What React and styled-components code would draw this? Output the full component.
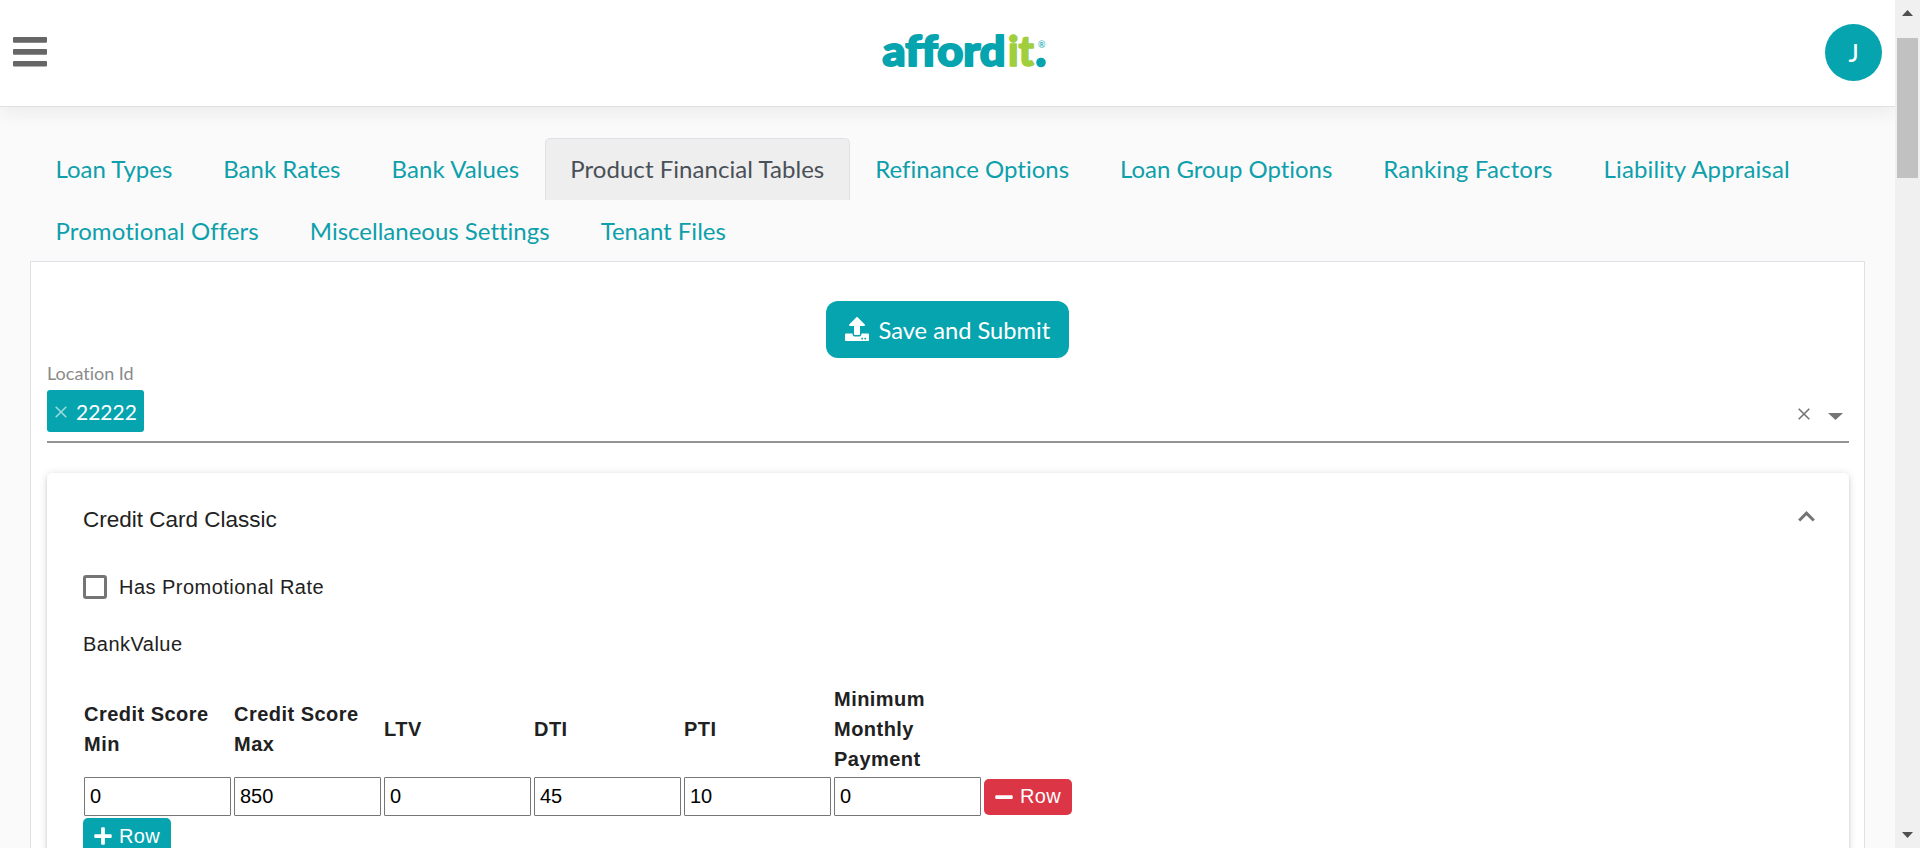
import React from "react";
import styled, { createGlobalStyle } from "styled-components";
import { FaUpload, FaPlus, FaMinus } from "react-icons/fa";

const teal = "#05a4af";

const GlobalStyle = createGlobalStyle`
  *, *::before, *::after { box-sizing: border-box; }
  body { margin: 0; background: #fafafa; font-family: Lato, sans-serif; font-variant-ligatures: none; overflow: hidden; }
`;

const Window = styled.div`
  display: grid;
  grid-template-columns: minmax(0, 1fr) 25px;
  height: 848px;
  overflow: hidden;
`;

const Page = styled.div`
  display: flex;
  flex-direction: column;
  overflow: hidden;
  height: 848px;
`;

const Header = styled.header`
  flex: none;
  display: grid;
  grid-template-columns: 1fr auto 1fr;
  align-items: center;
  height: 107px;
  padding: 0 13px;
  background: #fff;
  border-bottom: 1px solid #dee0e2;
  box-shadow: 0 8px 16px rgba(0, 0, 0, 0.05);
`;

const MenuIcon = styled.svg`
  display: block;
  width: 34px;
  height: 30px;
  margin-top: -3px;
  fill: #666;
`;

const Logo = styled.svg`
  display: block;
  width: 168px;
  height: 64px;
  margin-left: 33px;
  font-family: Lato, sans-serif;
  font-weight: 900;
`;

const Avatar = styled.div`
  justify-self: end;
  width: 57px;
  height: 57px;
  margin-top: -1px;
  border-radius: 50%;
  background: ${teal};
  color: #fff;
  font-size: 24px;
  font-weight: 500;
  line-height: 58px;
  text-align: center;
`;

const Tabs = styled.nav`
  flex: none;
  display: flex;
  flex-wrap: wrap;
  padding: 31px 30px 0;
`;

const Tab = styled.a`
  height: 62px;
  padding: 0 24.5px;
  border: 1px solid ${(p) => (p.$active ? "#dee2e6" : "transparent")};
  border-bottom: 0;
  border-radius: 5px 5px 0 0;
  background: ${(p) => (p.$active ? "#eeeeee" : "transparent")};
  color: ${(p) => (p.$active ? "#495057" : "#0d9fab")};
  font-size: 24px;
  letter-spacing: ${(p) => p.$tracking}px;
  line-height: 60px;
  white-space: nowrap;
`;

const Panel = styled.main`
  flex: 1;
  display: flex;
  flex-direction: column;
  margin: -1px 30px 0;
  padding: 39px 15px 0 16px;
  background: #fff;
  border: 1px solid #dee2e6;
  border-bottom: 0;
`;

const SubmitButton = styled.button`
  flex: none;
  align-self: center;
  display: flex;
  align-items: center;
  gap: 10px;
  width: 243px;
  height: 57px;
  margin-right: 2px;
  padding: 0 19px;
  border: 0;
  border-radius: 12px;
  background: ${teal};
  color: #fff;
  font: 23.7px Lato, sans-serif;
  white-space: nowrap;
  svg { flex: none; width: 24px; height: 24px; margin-top: -1px; }
`;

const SelectLabel = styled.label`
  margin-top: 4px;
  margin-bottom: 1px;
  color: #8a8a8a;
  font-size: 18px;
  line-height: 22px;
`;

const Select = styled.div`
  flex: none;
  display: flex;
  align-items: center;
  height: 58px;
  padding: 0 6px 4px 0;
  border-bottom: 2px solid #949494;
`;

const Chip = styled.span`
  display: flex;
  align-items: center;
  gap: 9px;
  width: 97px;
  height: 42px;
  padding: 1px 8px 0;
  border-radius: 3px;
  background: ${teal};
  color: #fff;
  font-size: 21px;
  svg { flex: none; width: 12px; height: 12px; opacity: 0.6; }
`;

const SelectIcons = styled.span`
  display: flex;
  align-items: center;
  gap: 18px;
  margin-left: auto;
  padding-top: 6px;
  color: #757575;
  svg { display: block; }
`;

const DropArrow = styled.svg`
  width: 15px;
  height: 7px;
  margin-top: 4px;
  fill: currentColor;
`;

const Card = styled.section`
  flex: 1;
  margin-top: 30px;
  padding: 32px 36px 0;
  background: #fff;
  border-radius: 5px;
  box-shadow: 0 4px 1px -3px rgba(0, 0, 0, 0.18), 0 2px 3px rgba(0, 0, 0, 0.12), 0 1px 8px rgba(0, 0, 0, 0.14);
  color: #212121;
  font-family: "Liberation Sans", Arial, sans-serif;
  font-size: 20px;
  letter-spacing: 0.47px;
`;

const CardHeader = styled.div`
  display: flex;
  align-items: center;
  justify-content: space-between;
  height: 30px;
  font-size: 22.5px;
  letter-spacing: 0;
  svg { margin: -8px -2px 0 0; }
`;

const CheckRow = styled.label`
  display: flex;
  align-items: center;
  gap: 12px;
  height: 30px;
  margin-top: 37px;
`;

const CheckBox = styled.span`
  width: 24px;
  height: 24px;
  margin-top: -1px;
  border: 3px solid #757575;
  border-radius: 3px;
`;

const SectionName = styled.p`
  margin: 27px 0 25px;
  line-height: 30px;
`;

const RateTable = styled.div`
  display: grid;
  grid-template-columns: repeat(6, 147px) auto;
  justify-content: start;
  align-items: center;
  column-gap: 3px;
  row-gap: 3px;
  padding-left: 1px;
`;

const HeadCell = styled.div`
  font-weight: 700;
  line-height: 30px;
`;

const Field = styled.input`
  width: 147px;
  height: 39px;
  padding: 0 5px;
  border: 1px solid #767676;
  border-radius: 1px;
  background: #fff;
  color: #000;
  font: 20px "Liberation Sans", Arial, sans-serif;
`;

const RowButton = styled.button`
  display: flex;
  align-items: center;
  gap: 6px;
  width: 88px;
  height: 36px;
  margin-top: ${(p) => (p.$tone === "add" ? "2px" : "0")};
  padding: 0 10px;
  border: 0;
  border-radius: 5px;
  background: ${(p) => (p.$tone === "add" ? teal : "#dc3545")};
  color: #fff;
  font: 20px "Liberation Sans", Arial, sans-serif;
  letter-spacing: 0.3px;
  svg { flex: none; width: 20px; height: 20px; }
`;

const Scrollbar = styled.aside`
  display: flex;
  flex-direction: column;
  align-items: center;
  height: 848px;
  padding: 10px 0;
  background: #f0f0f0;
  svg { display: block; fill: #505050; }
`;

const Thumb = styled.div`
  width: 21px;
  height: 140px;
  margin: 22px 0 auto;
  background: #c1c1c1;
`;

const tabs = [
  ["Loan Types", 0],
  ["Bank Rates", 0],
  ["Bank Values", 0.1],
  ["Product Financial Tables", 0.05],
  ["Refinance Options", 0],
  ["Loan Group Options", -0.03],
  ["Ranking Factors", 0.18],
  ["Liability Appraisal", 0.13],
  ["Promotional Offers", 0.1],
  ["Miscellaneous Settings", 0],
  ["Tenant Files", 0],
];

const columns = [
  ["Credit Score Min", "0"],
  ["Credit Score Max", "850"],
  ["LTV", "0"],
  ["DTI", "45"],
  ["PTI", "10"],
  ["Minimum Monthly Payment", "0"],
];

const Cross = ({ size = 12 }) => (
  <svg width={size} height={size} viewBox="0 0 12 12" fill="none" stroke="currentColor" strokeWidth="1.6">
    <path d="M.7.7 11.3 11.3M11.3.7.7 11.3" />
  </svg>
);

export default function App() {
  return (
    <>
      <GlobalStyle />
      <Window>
        <Page>
          <Header>
            <MenuIcon viewBox="0 0 34 30">
              <rect y="0" width="34" height="5.7" rx="1" />
              <rect y="12" width="34" height="5.7" rx="1" />
              <rect y="24" width="34" height="5.4" rx="1" />
            </MenuIcon>
            <Logo viewBox="0 0 168 64">
              <text x="2.5" y="45" fontSize="41.5" textLength="123" lengthAdjust="spacingAndGlyphs" fill={teal} stroke={teal} strokeWidth="2" strokeLinejoin="round">afford</text>
              <text x="128" y="45" fontSize="41.5" textLength="26" lengthAdjust="spacingAndGlyphs" fill="#a0ce3c" stroke="#a0ce3c" strokeWidth="1.6" strokeLinejoin="round">it</text>
              <circle cx="161" cy="41.5" r="4.8" fill={teal} />
              <text x="158" y="26.5" fontSize="9" fontWeight="700" fill={teal} opacity="0.75">®</text>
            </Logo>
            <Avatar>J</Avatar>
          </Header>
          <Tabs>
            {tabs.map(([name, tracking]) => (
              <Tab key={name} $tracking={tracking} $active={name === "Product Financial Tables"}>{name}</Tab>
            ))}
          </Tabs>
          <Panel>
            <SubmitButton><FaUpload />Save and Submit</SubmitButton>
            <SelectLabel>Location Id</SelectLabel>
            <Select>
              <Chip><Cross />22222</Chip>
              <SelectIcons>
                <Cross />
                <DropArrow viewBox="0 0 15 7"><path d="M0 0h15L7.5 7z" /></DropArrow>
              </SelectIcons>
            </Select>
            <Card>
              <CardHeader>
                Credit Card Classic
                <svg width="17" height="11" viewBox="0 0 17 11" fill="none" stroke="#757575" strokeWidth="3"><path d="M1.2 9.5 8.5 2.2l7.3 7.3" /></svg>
              </CardHeader>
              <CheckRow><CheckBox />Has Promotional Rate</CheckRow>
              <SectionName>BankValue</SectionName>
              <RateTable>
                {columns.map(([name]) => <HeadCell key={name}>{name}</HeadCell>)}
                <span />
                {columns.map(([name, value]) => <Field key={name} defaultValue={value} />)}
                <RowButton $tone="remove"><FaMinus />Row</RowButton>
              </RateTable>
              <RowButton $tone="add"><FaPlus />Row</RowButton>
            </Card>
          </Panel>
        </Page>
        <Scrollbar>
          <svg width="11" height="6" viewBox="0 0 11 6"><path d="M0 6 5.5 0 11 6z" /></svg>
          <Thumb />
          <svg width="11" height="6" viewBox="0 0 11 6"><path d="M0 0h11L5.5 6z" /></svg>
        </Scrollbar>
      </Window>
    </>
  );
}
